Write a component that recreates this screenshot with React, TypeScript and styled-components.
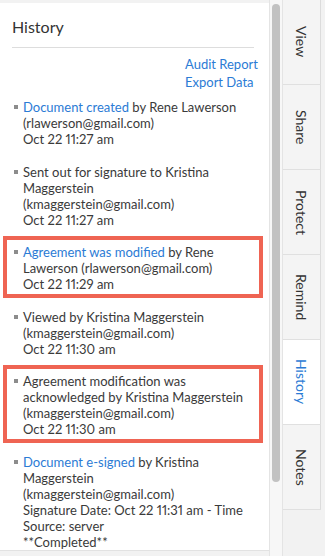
import styled, { createGlobalStyle } from 'styled-components';

const Global = createGlobalStyle`
  html, body {
    margin: 0;
    padding: 0;
    background: #f2f2f2;
  }
  body {
    font-family: Lato, "Liberation Sans", sans-serif;
    font-variant-numeric: proportional-nums;
    color: #3a3a3a;
  }
`;

const Layout = styled.div`
  display: flex;
  height: 556px;
  width: 325px;
  overflow: hidden;
`;

const Panel = styled.section`
  width: 242px;
  height: 547px;
  margin-top: 3px;
  padding: 0 15px 0 12px;
  background: #ffffff;
  border-bottom: 1px solid #e2e2e2;
  overflow: hidden;
`;

const Title = styled.h2`
  margin: 0;
  padding: 14px 0 10px;
  font-size: 16px;
  line-height: 20px;
  font-weight: normal;
  color: #333;
  border-bottom: 1px solid #dddddd;
`;

const Actions = styled.div`
  display: flex;
  flex-direction: column;
  align-items: flex-start;
  margin-top: 7px;
  padding-left: 173px;
  font-size: 13px;
  line-height: 18px;
  white-space: nowrap;
`;

const Link = styled.a`
  color: #2b7bd5;
  text-decoration: none;
`;

const Events = styled.ul`
  list-style: none;
  margin: 8px 0 0;
  padding: 0;
  display: flex;
  flex-direction: column;
  gap: 17px;
`;

const Event = styled.li<{ $marked?: boolean }>`
  display: flex;
  align-items: flex-start;
  gap: 5px;
  padding: 0 11px 0 2px;
  font-size: 13px;
  line-height: 16px;
  ${(p) =>
    p.$marked &&
    `
    margin: -9px -9px -6px -9px;
    padding: 4px 4px 2px 7px;
    border: 4px solid #ef6453;
  `}
`;

const Bullet = styled.span`
  flex: none;
  width: 4px;
  height: 4px;
  margin-top: 6px;
  background: #8c8c8c;
`;

const Body = styled.div`
  flex: 1;
`;

const Track = styled.div`
  width: 14px;
  height: 556px;
  padding-top: 4px;
  box-sizing: border-box;
  background: #f7f7f7;
  border-left: 1px solid #e4e4e4;
  border-right: 1px solid #e4e4e4;
  display: flex;
  justify-content: center;
`;

const Thumb = styled.div`
  width: 8px;
  height: 478px;
  border-radius: 4px;
  background: #c2c2c2;
`;

const Tabs = styled.nav`
  display: flex;
  flex-direction: column;
  width: 38px;
`;

const Tab = styled.div<{ $active?: boolean }>`
  height: 85px;
  box-sizing: border-box;
  display: flex;
  align-items: center;
  justify-content: center;
  writing-mode: vertical-rl;
  font-size: 14px;
  color: ${(p) => (p.$active ? '#2b7bd5' : '#333')};
  background: ${(p) => (p.$active ? '#ffffff' : '#f4f4f4')};
  border-right: 1px solid #dcdcdc;
  border-bottom: 1px solid #e0e0e0;
`;

const tabs = ['View', 'Share', 'Protect', 'Remind', 'History', 'Notes'];

export default function App() {
  return (
    <>
      <Global />
      <Layout>
        <Panel>
          <Title>History</Title>
          <Actions>
            <Link href="#">Audit Report</Link>
            <Link href="#">Export Data</Link>
          </Actions>
          <Events>
            <Event>
              <Bullet />
              <Body>
                <Link href="#">Document created</Link> by Rene Lawerson (rlawerson@gmail.com)
                <br />
                Oct 22 11:27 am
              </Body>
            </Event>
            <Event>
              <Bullet />
              <Body>
                Sent out for signature to Kristina Maggerstein (kmaggerstein@gmail.com)
                <br />
                Oct 22 11:27 am
              </Body>
            </Event>
            <Event $marked>
              <Bullet />
              <Body>
                <Link href="#">Agreement was modified</Link> by Rene Lawerson (rlawerson@gmail.com)
                <br />
                Oct 22 11:29 am
              </Body>
            </Event>
            <Event>
              <Bullet />
              <Body>
                Viewed by Kristina Maggerstein (kmaggerstein@gmail.com)
                <br />
                Oct 22 11:30 am
              </Body>
            </Event>
            <Event $marked>
              <Bullet />
              <Body>
                Agreement modification was acknowledged by Kristina Maggerstein (kmaggerstein@gmail.com)
                <br />
                Oct 22 11:30 am
              </Body>
            </Event>
            <Event>
              <Bullet />
              <Body>
                <Link href="#">Document e-signed</Link> by Kristina Maggerstein (kmaggerstein@gmail.com)
                <br />
                Signature Date: Oct 22 11:31 am - Time Source: server
                <br />
                **Completed**
              </Body>
            </Event>
          </Events>
        </Panel>
        <Track>
          <Thumb />
        </Track>
        <Tabs>
          {tabs.map((t) => (
            <Tab key={t} $active={t === 'History'}>
              {t}
            </Tab>
          ))}
        </Tabs>
      </Layout>
    </>
  );
}
